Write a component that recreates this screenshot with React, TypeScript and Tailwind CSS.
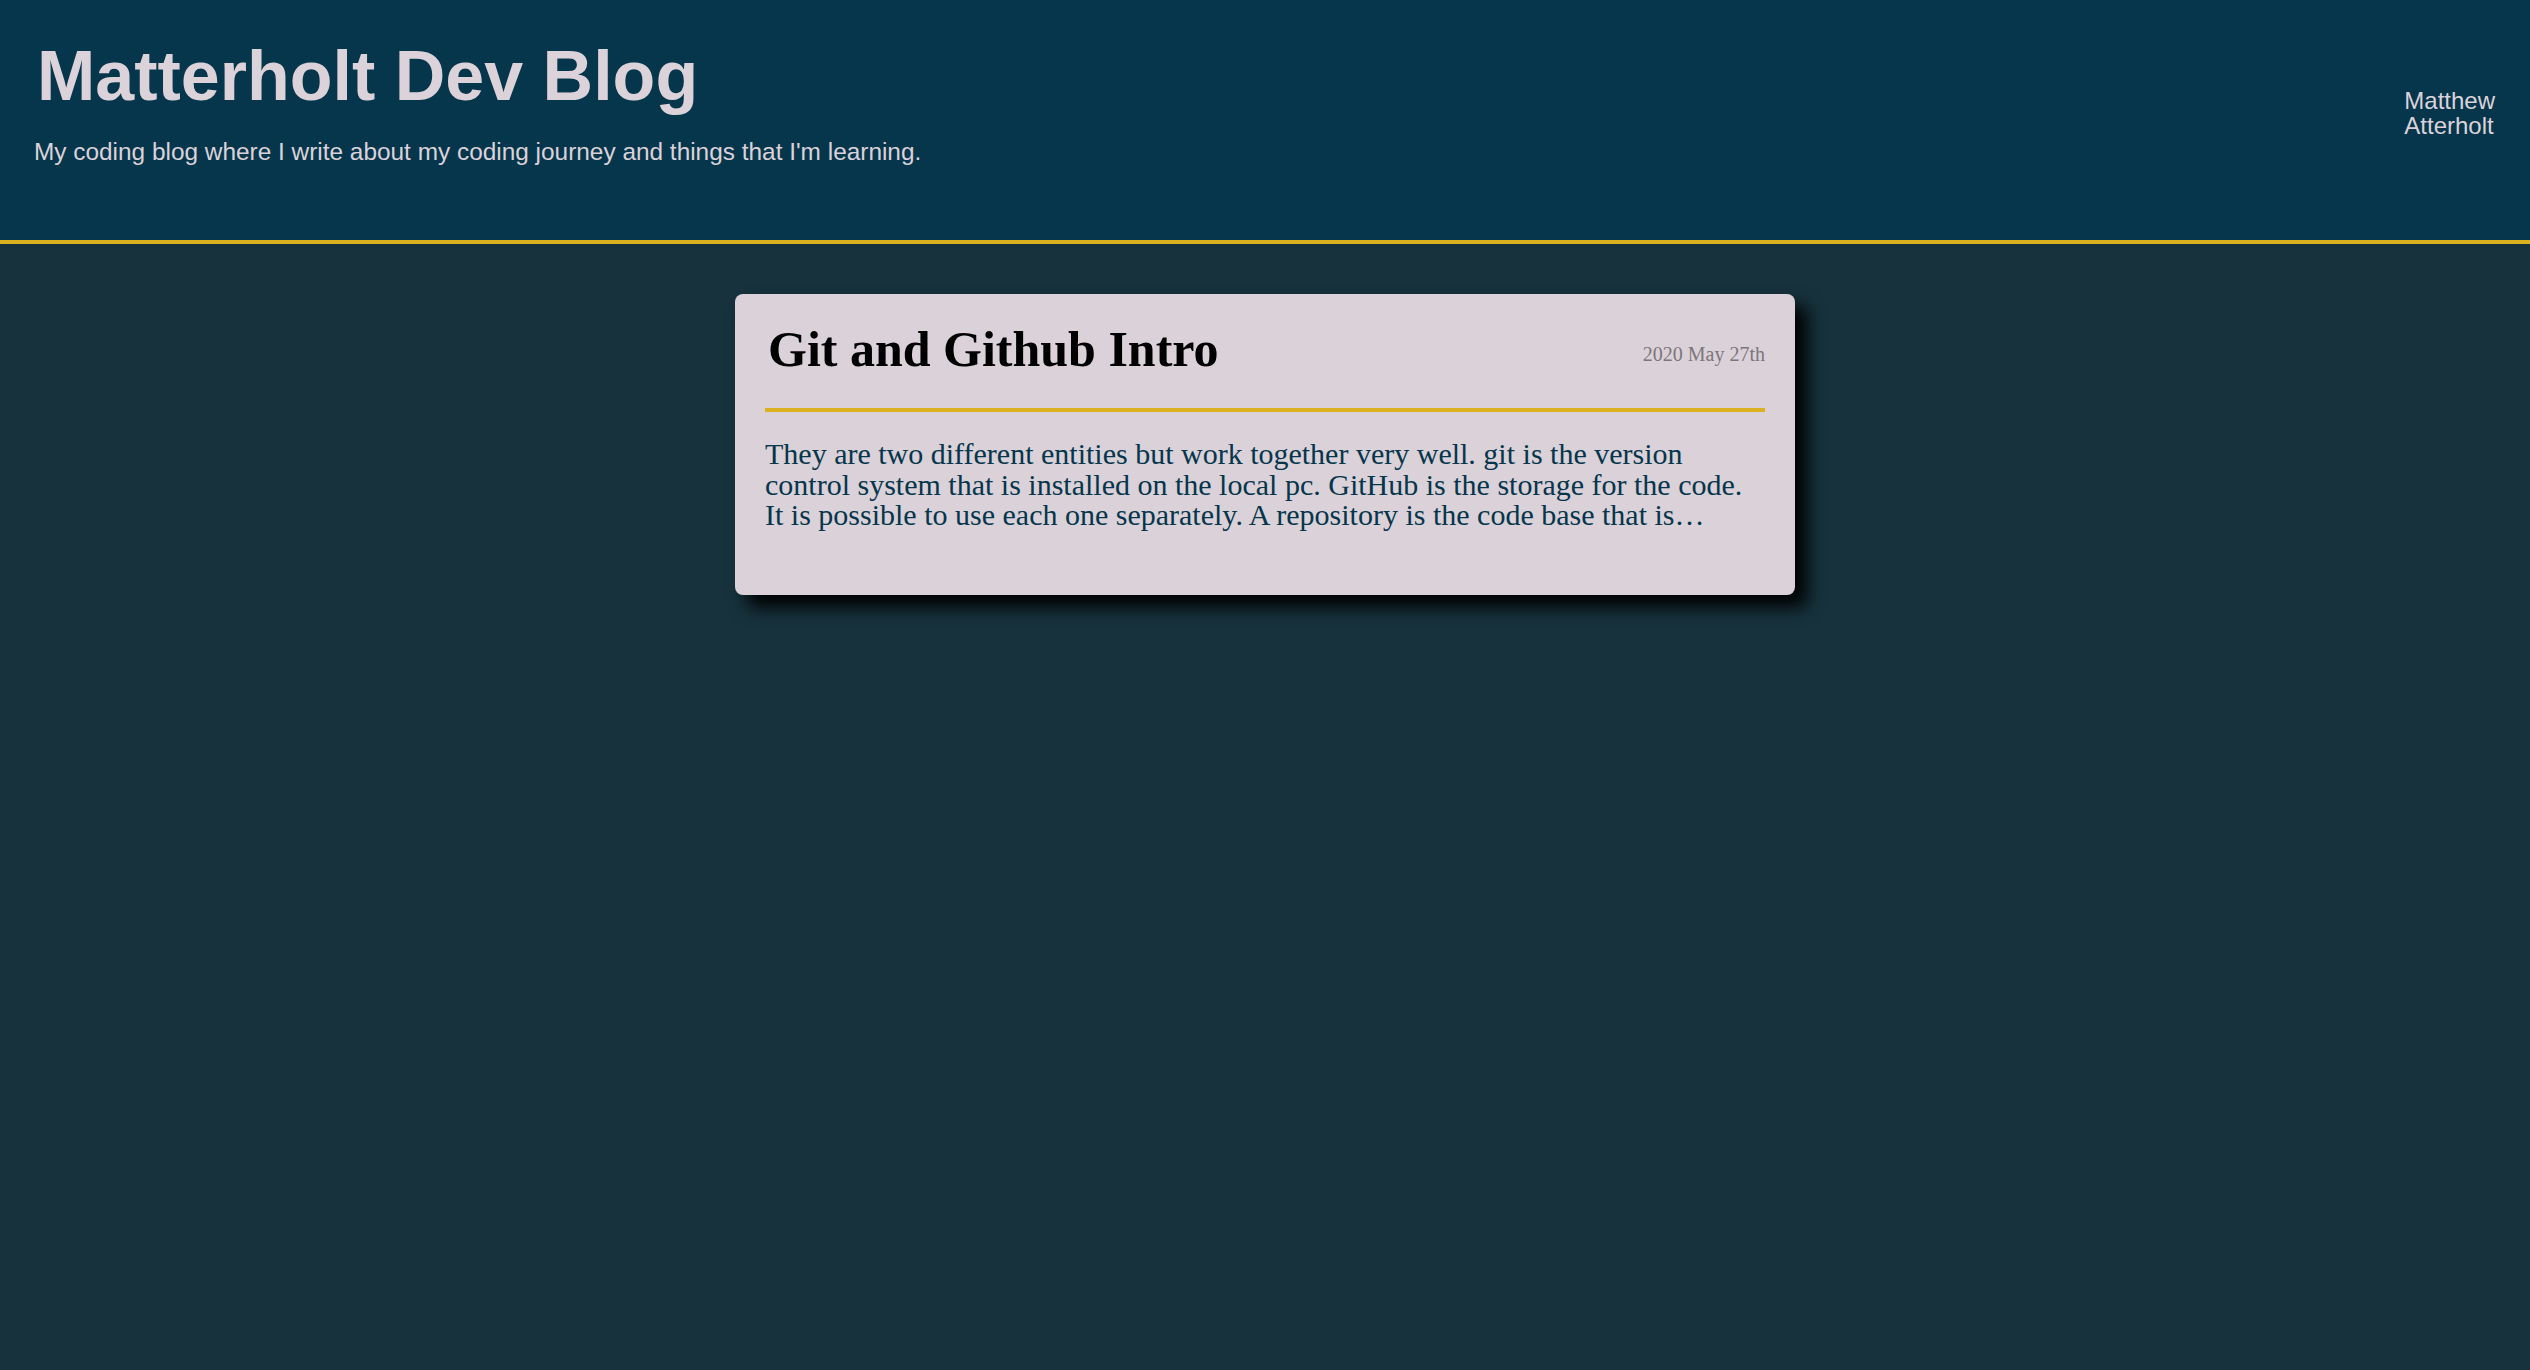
import React from "react";

interface Post {
  id: number;
  title: string;
  date: string;
  excerpt: string;
}

const posts: Post[] = [
  {
    id: 1,
    title: "Git and Github Intro",
    date: "2020 May 27th",
    excerpt:
      "They are two different entities but work together very well. git is the version control system that is installed on the local pc. GitHub is the storage for the code. It is possible to use each one separately. A repository is the code base that is…",
  },
];

const Header = () => {
  return (
    <header className="h-[244px] bg-[#05364b] border-b-4 border-[#dcb11f] flex justify-between">
      <div className="pl-[34px] pt-[36px]">
        <h1 className="ml-[3px] text-[70px] leading-[80px] font-bold text-[#dbd2da]">
          Matterholt Dev Blog
        </h1>
        <p className="mt-[20px] text-[24.4px] leading-[32px] text-[#dbd2da]">
          My coding blog where I write about my coding journey and things that I'm learning.
        </p>
      </div>
      <div className="pr-[35px] pt-[88px] text-[24px] leading-[25px] text-[#dbd2da]">
        <div>Matthew</div>
        <div>Atterholt</div>
      </div>
    </header>
  );
};

const PostCard = ({ post }: { post: Post }) => {
  return (
    <article className="w-[1060px] rounded-lg bg-[#dbd1d9] px-[30px] pt-[25px] pb-[64px] shadow-[12px_12px_18px_#000] font-['Liberation_Serif',serif]">
      <div className="flex justify-between items-start">
        <h2 className="ml-[3px] text-[50px] leading-[60px] font-bold text-black">{post.title}</h2>
        <span className="mt-[23px] text-[20px] leading-[24px] text-[#7b7679]">{post.date}</span>
      </div>
      <div className="mt-[29px] h-[4px] bg-[#dcb11f]" />
      <p className="mt-[27px] pr-[10px] text-[30px] leading-[30.5px] text-[#05364b]">{post.excerpt}</p>
    </article>
  );
};

const App = () => {
  return (
    <div className="min-h-screen bg-[#17323d] font-['Liberation_Sans',Arial,sans-serif]">
      <Header />
      <main className="flex flex-col items-center pt-[50px] gap-8">
        {posts.map((post) => (
          <PostCard key={post.id} post={post} />
        ))}
      </main>
    </div>
  );
};

export default App;
